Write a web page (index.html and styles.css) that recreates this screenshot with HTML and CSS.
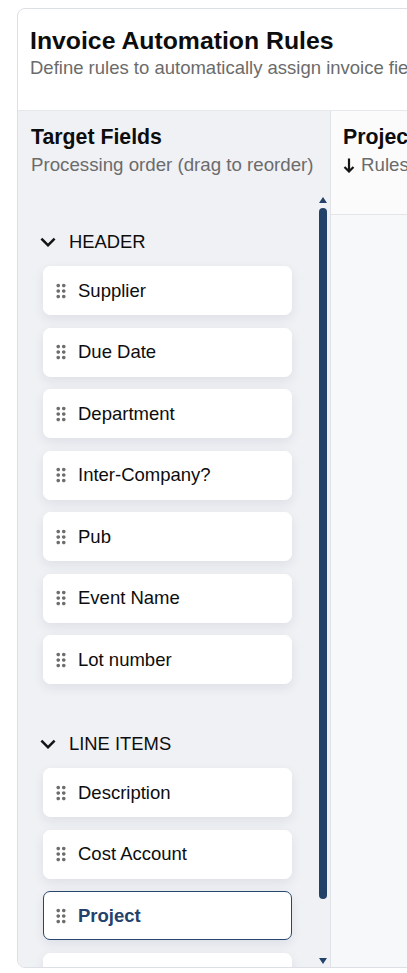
FILE: index.html
```html
<!DOCTYPE html>
<html lang="en">
<head>
<meta charset="utf-8">
<title>Invoice Automation Rules</title>
<link rel="stylesheet" href="styles.css">
</head>
<body>
<div class="card">
  <header class="card-head">
    <h1 class="title">Invoice Automation Rules</h1>
    <p class="subtitle">Define rules to automatically assign invoice fields based on conditions</p>
  </header>
  <div class="card-body">
    <aside class="fields">
      <div class="fields-head">
        <h2 class="panel-title">Target Fields</h2>
        <p class="panel-sub">Processing order (drag to reorder)</p>
      </div>
      <div class="fields-body">
        <div class="field-list">
          <section class="group">
            <div class="group-head">
              <svg class="chev" viewBox="0 0 24 24"><path d="M16.59 8.59L12 13.17 7.41 8.59 6 10l6 6 6-6z"/></svg>
              <span>HEADER</span>
            </div>
            <ul class="items">
              <li class="item"><svg class="grip" viewBox="0 0 24 24"><path d="M11 18c0 1.1-.9 2-2 2s-2-.9-2-2 .9-2 2-2 2 .9 2 2zm-2-8c-1.1 0-2 .9-2 2s.9 2 2 2 2-.9 2-2-.9-2-2-2zm0-6c-1.1 0-2 .9-2 2s.9 2 2 2 2-.9 2-2-.9-2-2-2zm6 4c1.1 0 2-.9 2-2s-.9-2-2-2-2 .9-2 2 .9 2 2 2zm0 2c-1.1 0-2 .9-2 2s.9 2 2 2 2-.9 2-2-.9-2-2-2zm0 6c-1.1 0-2 .9-2 2s.9 2 2 2 2-.9 2-2-.9-2-2-2z"/></svg><span>Supplier</span></li>
              <li class="item"><svg class="grip" viewBox="0 0 24 24"><path d="M11 18c0 1.1-.9 2-2 2s-2-.9-2-2 .9-2 2-2 2 .9 2 2zm-2-8c-1.1 0-2 .9-2 2s.9 2 2 2 2-.9 2-2-.9-2-2-2zm0-6c-1.1 0-2 .9-2 2s.9 2 2 2 2-.9 2-2-.9-2-2-2zm6 4c1.1 0 2-.9 2-2s-.9-2-2-2-2 .9-2 2 .9 2 2 2zm0 2c-1.1 0-2 .9-2 2s.9 2 2 2 2-.9 2-2-.9-2-2-2zm0 6c-1.1 0-2 .9-2 2s.9 2 2 2 2-.9 2-2-.9-2-2-2z"/></svg><span>Due Date</span></li>
              <li class="item"><svg class="grip" viewBox="0 0 24 24"><path d="M11 18c0 1.1-.9 2-2 2s-2-.9-2-2 .9-2 2-2 2 .9 2 2zm-2-8c-1.1 0-2 .9-2 2s.9 2 2 2 2-.9 2-2-.9-2-2-2zm0-6c-1.1 0-2 .9-2 2s.9 2 2 2 2-.9 2-2-.9-2-2-2zm6 4c1.1 0 2-.9 2-2s-.9-2-2-2-2 .9-2 2 .9 2 2 2zm0 2c-1.1 0-2 .9-2 2s.9 2 2 2 2-.9 2-2-.9-2-2-2zm0 6c-1.1 0-2 .9-2 2s.9 2 2 2 2-.9 2-2-.9-2-2-2z"/></svg><span>Department</span></li>
              <li class="item"><svg class="grip" viewBox="0 0 24 24"><path d="M11 18c0 1.1-.9 2-2 2s-2-.9-2-2 .9-2 2-2 2 .9 2 2zm-2-8c-1.1 0-2 .9-2 2s.9 2 2 2 2-.9 2-2-.9-2-2-2zm0-6c-1.1 0-2 .9-2 2s.9 2 2 2 2-.9 2-2-.9-2-2-2zm6 4c1.1 0 2-.9 2-2s-.9-2-2-2-2 .9-2 2 .9 2 2 2zm0 2c-1.1 0-2 .9-2 2s.9 2 2 2 2-.9 2-2-.9-2-2-2zm0 6c-1.1 0-2 .9-2 2s.9 2 2 2 2-.9 2-2-.9-2-2-2z"/></svg><span>Inter-Company?</span></li>
              <li class="item"><svg class="grip" viewBox="0 0 24 24"><path d="M11 18c0 1.1-.9 2-2 2s-2-.9-2-2 .9-2 2-2 2 .9 2 2zm-2-8c-1.1 0-2 .9-2 2s.9 2 2 2 2-.9 2-2-.9-2-2-2zm0-6c-1.1 0-2 .9-2 2s.9 2 2 2 2-.9 2-2-.9-2-2-2zm6 4c1.1 0 2-.9 2-2s-.9-2-2-2-2 .9-2 2 .9 2 2 2zm0 2c-1.1 0-2 .9-2 2s.9 2 2 2 2-.9 2-2-.9-2-2-2zm0 6c-1.1 0-2 .9-2 2s.9 2 2 2 2-.9 2-2-.9-2-2-2z"/></svg><span>Pub</span></li>
              <li class="item"><svg class="grip" viewBox="0 0 24 24"><path d="M11 18c0 1.1-.9 2-2 2s-2-.9-2-2 .9-2 2-2 2 .9 2 2zm-2-8c-1.1 0-2 .9-2 2s.9 2 2 2 2-.9 2-2-.9-2-2-2zm0-6c-1.1 0-2 .9-2 2s.9 2 2 2 2-.9 2-2-.9-2-2-2zm6 4c1.1 0 2-.9 2-2s-.9-2-2-2-2 .9-2 2 .9 2 2 2zm0 2c-1.1 0-2 .9-2 2s.9 2 2 2 2-.9 2-2-.9-2-2-2zm0 6c-1.1 0-2 .9-2 2s.9 2 2 2 2-.9 2-2-.9-2-2-2z"/></svg><span>Event Name</span></li>
              <li class="item"><svg class="grip" viewBox="0 0 24 24"><path d="M11 18c0 1.1-.9 2-2 2s-2-.9-2-2 .9-2 2-2 2 .9 2 2zm-2-8c-1.1 0-2 .9-2 2s.9 2 2 2 2-.9 2-2-.9-2-2-2zm0-6c-1.1 0-2 .9-2 2s.9 2 2 2 2-.9 2-2-.9-2-2-2zm6 4c1.1 0 2-.9 2-2s-.9-2-2-2-2 .9-2 2 .9 2 2 2zm0 2c-1.1 0-2 .9-2 2s.9 2 2 2 2-.9 2-2-.9-2-2-2zm0 6c-1.1 0-2 .9-2 2s.9 2 2 2 2-.9 2-2-.9-2-2-2z"/></svg><span>Lot number</span></li>
            </ul>
          </section>
          <section class="group">
            <div class="group-head">
              <svg class="chev" viewBox="0 0 24 24"><path d="M16.59 8.59L12 13.17 7.41 8.59 6 10l6 6 6-6z"/></svg>
              <span>LINE ITEMS</span>
            </div>
            <ul class="items">
              <li class="item"><svg class="grip" viewBox="0 0 24 24"><path d="M11 18c0 1.1-.9 2-2 2s-2-.9-2-2 .9-2 2-2 2 .9 2 2zm-2-8c-1.1 0-2 .9-2 2s.9 2 2 2 2-.9 2-2-.9-2-2-2zm0-6c-1.1 0-2 .9-2 2s.9 2 2 2 2-.9 2-2-.9-2-2-2zm6 4c1.1 0 2-.9 2-2s-.9-2-2-2-2 .9-2 2 .9 2 2 2zm0 2c-1.1 0-2 .9-2 2s.9 2 2 2 2-.9 2-2-.9-2-2-2zm0 6c-1.1 0-2 .9-2 2s.9 2 2 2 2-.9 2-2-.9-2-2-2z"/></svg><span>Description</span></li>
              <li class="item"><svg class="grip" viewBox="0 0 24 24"><path d="M11 18c0 1.1-.9 2-2 2s-2-.9-2-2 .9-2 2-2 2 .9 2 2zm-2-8c-1.1 0-2 .9-2 2s.9 2 2 2 2-.9 2-2-.9-2-2-2zm0-6c-1.1 0-2 .9-2 2s.9 2 2 2 2-.9 2-2-.9-2-2-2zm6 4c1.1 0 2-.9 2-2s-.9-2-2-2-2 .9-2 2 .9 2 2 2zm0 2c-1.1 0-2 .9-2 2s.9 2 2 2 2-.9 2-2-.9-2-2-2zm0 6c-1.1 0-2 .9-2 2s.9 2 2 2 2-.9 2-2-.9-2-2-2z"/></svg><span>Cost Account</span></li>
              <li class="item active"><svg class="grip" viewBox="0 0 24 24"><path d="M11 18c0 1.1-.9 2-2 2s-2-.9-2-2 .9-2 2-2 2 .9 2 2zm-2-8c-1.1 0-2 .9-2 2s.9 2 2 2 2-.9 2-2-.9-2-2-2zm0-6c-1.1 0-2 .9-2 2s.9 2 2 2 2-.9 2-2-.9-2-2-2zm6 4c1.1 0 2-.9 2-2s-.9-2-2-2-2 .9-2 2 .9 2 2 2zm0 2c-1.1 0-2 .9-2 2s.9 2 2 2 2-.9 2-2-.9-2-2-2zm0 6c-1.1 0-2 .9-2 2s.9 2 2 2 2-.9 2-2-.9-2-2-2z"/></svg><span>Project</span></li>
              <li class="item"><svg class="grip" viewBox="0 0 24 24"><path d="M11 18c0 1.1-.9 2-2 2s-2-.9-2-2 .9-2 2-2 2 .9 2 2zm-2-8c-1.1 0-2 .9-2 2s.9 2 2 2 2-.9 2-2-.9-2-2-2zm0-6c-1.1 0-2 .9-2 2s.9 2 2 2 2-.9 2-2-.9-2-2-2zm6 4c1.1 0 2-.9 2-2s-.9-2-2-2-2 .9-2 2 .9 2 2 2zm0 2c-1.1 0-2 .9-2 2s.9 2 2 2 2-.9 2-2-.9-2-2-2zm0 6c-1.1 0-2 .9-2 2s.9 2 2 2 2-.9 2-2-.9-2-2-2z"/></svg><span>Quantity</span></li>
            </ul>
          </section>
        </div>
        <div class="scrollbar">
          <span class="arrow-up"></span>
          <span class="thumb"></span>
          <span class="spacer"></span>
          <span class="arrow-down"></span>
        </div>
      </div>
    </aside>
    <main class="rules">
      <div class="rules-head">
        <h2 class="panel-title">Project Rules</h2>
        <p class="panel-sub rules-sub"><svg class="down" viewBox="0 0 12 16"><path d="M6 1.5V14.5M1.5 10L6 14.5L10.5 10"/></svg><span>Rules are evaluated top to bottom; first match wins</span></p>
      </div>
      <div class="rules-body"></div>
    </main>
  </div>
</div>
</body>
</html>
```
FILE: styles.css
```css
html, body {
  margin: 0;
  padding: 0;
  overflow: hidden;
  background: #ffffff;
}
body {
  padding: 8px 0 0 17px;
  font-family: "Liberation Sans", Arial, sans-serif;
  color: #0d0d0d;
}
.card {
  width: 1000px;
  height: 960px;
  box-sizing: border-box;
  border: 1px solid #dcdfe4;
  border-radius: 8px;
  overflow: hidden;
  display: flex;
  flex-direction: column;
  background: #ffffff;
}
.card-head {
  padding: 17.3px 12px 29.7px 12px;
  border-bottom: 1px solid #e6e8ec;
  white-space: nowrap;
}
.title {
  margin: 0;
  font-size: 24.8px;
  line-height: 30px;
  font-weight: 700;
  color: #0d0d0d;
}
.subtitle {
  margin: 0;
  font-size: 18.5px;
  line-height: 24px;
  color: #6b6b6b;
}
.card-body {
  flex: 1;
  display: flex;
  min-height: 0;
}
.fields {
  width: 313px;
  box-sizing: border-box;
  border-right: 1px solid #dfe2e7;
  background: #f0f1f5;
  display: flex;
  flex-direction: column;
}
.fields-head {
  padding: 12.6px 13px 18.4px 13px;
  white-space: nowrap;
}
.panel-title {
  margin: 0;
  font-size: 21.3px;
  line-height: 26px;
  font-weight: 700;
  color: #0d0d0d;
}
.panel-sub {
  margin: 3px 0 0 0;
  font-size: 18.7px;
  line-height: 24px;
  color: #6b6b6b;
}
.fields-body {
  flex: 1;
  min-height: 0;
  display: flex;
}
.field-list {
  flex: 1;
  overflow: hidden;
  padding: 35px 15px 0 15px;
  display: flex;
  flex-direction: column;
  gap: 47.5px;
}
.group-head {
  height: 24px;
  display: flex;
  align-items: center;
  gap: 6.5px;
  font-size: 18.4px;
  line-height: 24px;
  color: #0d0d0d;
}
.chev {
  width: 30px;
  height: 30px;
  margin: -3px 0 -3px -0.5px;
  fill: #141414;
  flex: none;
}
.items {
  list-style: none;
  margin: 12.5px 11px 0 10px;
  padding: 0;
  display: flex;
  flex-direction: column;
  gap: 12.5px;
}
.item {
  height: 49px;
  box-sizing: border-box;
  border: 1px solid #ffffff;
  border-radius: 7px;
  background: #ffffff;
  box-shadow: 0 4px 12px rgba(20, 30, 50, 0.08);
  display: flex;
  align-items: center;
  padding-left: 6px;
  gap: 6px;
  font-size: 18.5px;
  color: #0d0d0d;
  flex: none;
}
.grip {
  width: 22px;
  height: 22px;
  fill: #6e6e6e;
  flex: none;
}
.item.active {
  border-color: #27466f;
  color: #24426b;
  font-weight: 700;
}
.scrollbar {
  width: 10px;
  margin-right: 2px;
  display: flex;
  flex-direction: column;
  align-items: center;
  padding: 2px 0 3px 0;
}
.arrow-up {
  width: 0;
  height: 0;
  border-left: 4.5px solid transparent;
  border-right: 4.5px solid transparent;
  border-bottom: 6px solid #23426a;
}
.thumb {
  margin-top: 5px;
  width: 7.4px;
  height: 691px;
  border-radius: 4px;
  background: #23426a;
}
.spacer {
  flex: 1;
}
.arrow-down {
  width: 0;
  height: 0;
  border-left: 4.5px solid transparent;
  border-right: 4.5px solid transparent;
  border-top: 6px solid #23426a;
}
.rules {
  flex: 1;
  display: flex;
  flex-direction: column;
  background: #f7f8fa;
}
.rules-head {
  height: 104px;
  box-sizing: border-box;
  padding: 12.6px 12px 0 12px;
  background: #fbfbfc;
  border-bottom: 1px solid #e3e5e9;
  white-space: nowrap;
}
.rules-sub {
  display: flex;
  align-items: center;
  gap: 6px;
}
.down {
  width: 12px;
  height: 16px;
  fill: none;
  stroke: #141414;
  stroke-width: 2.2;
  flex: none;
}
.rules-body {
  flex: 1;
}
```
